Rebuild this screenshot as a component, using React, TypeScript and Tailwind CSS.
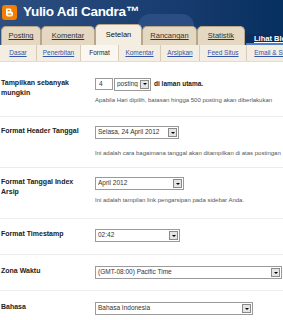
import React from "react";

const F = { fontFamily: '"Liberation Sans", Arial, sans-serif' };

function Sel({ w, text }: { w: number; text: string }) {
  return (
    <div
      className="flex items-center h-[13px] border border-[#9a9a9a] bg-white pl-[2px] pr-[1px] text-[6.5px] text-[#333]"
      style={{ width: w }}
    >
      <span className="flex-1 overflow-hidden whitespace-nowrap leading-none">{text}</span>
      <span className="w-[9px] h-[9px] border border-[#8a8a8a] bg-[#e4e4e4] flex items-center justify-center">
        <span className="w-0 h-0 border-l-[2px] border-r-[2px] border-t-[2px] border-l-transparent border-r-transparent border-t-black" />
      </span>
    </div>
  );
}

function Row({
  label,
  children,
  help,
  cls,
  hm = "mt-[8px]",
}: {
  label: React.ReactNode;
  children: React.ReactNode;
  help?: string;
  cls: string;
  hm?: string;
}) {
  return (
    <div className={"flex border-b border-[#ececec] " + cls}>
      <div className="w-[95px] shrink-0 pl-[1px] text-[7px] font-bold leading-[10px] text-[#222]">
        {label}
      </div>
      <div className="flex-1 min-w-0">
        {children}
        {help && (
          <div className={"text-[6px] leading-[8px] text-[#555] whitespace-nowrap " + hm}>{help}</div>
        )}
      </div>
    </div>
  );
}

export default function App() {
  const tabs = [
    { t: "Posting", w: 40 },
    { t: "Komentar", w: 54 },
    { t: "Setelan", w: 47, sel: true },
    { t: "Rancangan", w: 55 },
    { t: "Statistik", w: 48 },
  ];
  const subs = [
    { t: "Dasar", w: 36 },
    { t: "Penerbitan", w: 44 },
    { t: "Format", w: 38, sel: true },
    { t: "Komentar", w: 42 },
    { t: "Arsipkan", w: 39 },
    { t: "Feed Situs", w: 47 },
    { t: "Email & Seluler", w: 60 },
  ];
  return (
    <div className="w-[283px] h-[320px] overflow-hidden bg-white" style={F}>
      <div className="relative h-[45px] bg-gradient-to-r from-[#2e4f80] via-[#1c3f72] to-[#06305f] overflow-hidden">
        <div className="absolute left-[138px] top-[14px] w-[56px] h-[40px] rounded-t-[12px] bg-[#2a4e84]" />
        <div className="relative flex items-center h-[24px] pl-[2px] gap-[6px]">
          <div className="w-[15px] h-[15px] rounded-[3px] bg-[#f57d00] flex items-center justify-center">
            <svg width="11" height="11" viewBox="0 0 11 11">
              <path
                d="M2 1.5h4a1.5 1.5 0 0 1 0 3H7.5a1.5 1.5 0 0 1 1.5 1.5v1.5a2 2 0 0 1-2 2H4a2 2 0 0 1-2-2z"
                fill="white"
              />
              <rect x="3.5" y="3" width="2.5" height="1.2" rx="0.6" fill="#f57d00" />
              <rect x="3.5" y="6.5" width="4" height="1.2" rx="0.6" fill="#f57d00" />
            </svg>
          </div>
          <div className="text-white font-bold text-[13.5px] tracking-[-0.3px] leading-none">
            Yulio Adi Candra™
          </div>
        </div>
        <div className="relative flex items-end h-[21px] pl-[1px]">
          {tabs.map((x) => (
            <div
              key={x.t}
              className={
                "shrink-0 flex items-center justify-center rounded-t-[5px] border border-b-0 border-[#b8a688] text-[7.5px] " +
                (x.sel ? "h-[21px] bg-[#f3ede2] text-[#111] font-medium" : "h-[19px] bg-[#e4d8c2] text-[#333] underline")
              }
              style={{ width: x.w }}
            >
              {x.t}
            </div>
          ))}
          <div className="ml-[1px] h-[11px] flex-1 min-w-0 bg-[#0d2d5c] border-b-[2px] border-[#4f7fc7] pl-[8px] text-white text-[7.5px] font-bold underline leading-[9px] whitespace-nowrap overflow-hidden">
            Lihat Blog
          </div>
        </div>
      </div>
      <div className="flex h-[17px] bg-[#f3ede2] border-b border-[#e5dccb] overflow-hidden">
        {subs.map((x, i) => (
          <div
            key={x.t}
            className={
              "shrink-0 flex items-center justify-center text-[6.5px] whitespace-nowrap " +
              (i > 0 ? "border-l border-[#d8ccb6] " : "") +
              (x.sel ? "bg-[#faf7f1] text-[#222]" : "text-[#3355aa] underline")
            }
            style={{ width: x.w }}
          >
            {x.t}
          </div>
        ))}
      </div>
      <div>
        <Row
          cls="pt-[16px] h-[55px]"
          hm="mt-[6px]"
          label={<>Tampilkan sebanyak<br />mungkin</>}
          help="Apabila Hari dipilih, batasan hingga 500 posting akan diberlakukan"
        >
          <div className="flex items-center gap-[1px] h-[12px]">
            <div className="w-[18px] h-[12px] border border-[#9a9a9a] text-[6.5px] pl-[3px] leading-[10px] text-[#333]">4</div>
            <Sel w={37} text="posting" />
            <span className="ml-[2px] text-[6.5px] font-bold text-[#222]">di laman utama.</span>
          </div>
        </Row>
        <Row
          cls="pt-[9px] h-[51px]"
          hm="mt-[10px]"
          label="Format Header Tanggal"
          help="Ini adalah cara bagaimana tanggal akan ditampilkan di atas postingan"
        >
          <Sel w={84} text="Selasa, 24 April 2012" />
        </Row>
        <Row
          cls="pt-[9px] h-[51px]"
          hm="mt-[6px]"
          label={<>Format Tanggal Index<br />Arsip</>}
          help="Ini adalah tampilan link pengarsipan pada sidebar Anda."
        >
          <Sel w={89} text="April 2012" />
        </Row>
        <Row cls="pt-[10px] h-[36px]" label="Format Timestamp">
          <Sel w={85} text="02:42" />
        </Row>
        <Row cls="pt-[11px] h-[36px]" label="Zona Waktu">
          <Sel w={187} text="(GMT-08:00) Pacific Time" />
        </Row>
        <Row cls="pt-[11px] h-[36px] border-b-0" label="Bahasa">
          <Sel w={158} text="Bahasa Indonesia" />
        </Row>
      </div>
    </div>
  );
}
